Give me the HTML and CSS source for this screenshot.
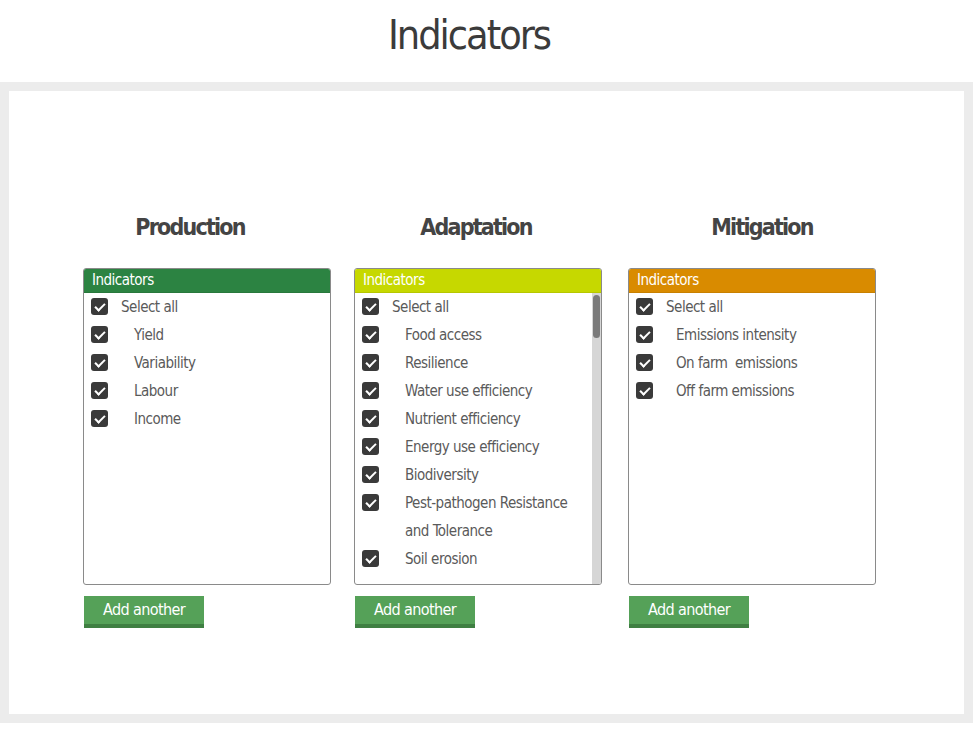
FILE: index.html
```html
<!DOCTYPE html>
<html>
<head>
<meta charset="utf-8">
<link rel="stylesheet" href="styles.css">
</head>
<body>
<header class="page-head"><h1 class="title">Indicators</h1></header>
<div class="frame">
  <div class="columns">
    <section class="col col-prod">
      <h2 class="col-title">Production</h2>
      <div class="box">
        <div class="box-head head-green">Indicators</div>
        <ul class="list">
          <li class="row all"><span class="cb"></span><span class="lbl">Select all</span></li>
          <li class="row"><span class="cb"></span><span class="lbl">Yield</span></li>
          <li class="row"><span class="cb"></span><span class="lbl">Variability</span></li>
          <li class="row"><span class="cb"></span><span class="lbl">Labour</span></li>
          <li class="row"><span class="cb"></span><span class="lbl">Income</span></li>
        </ul>
      </div>
      <button class="add">Add another</button>
    </section>
    <section class="col col-adapt">
      <h2 class="col-title">Adaptation</h2>
      <div class="box">
        <div class="box-head head-lime">Indicators</div>
        <div class="list-wrap">
          <ul class="list">
            <li class="row all"><span class="cb"></span><span class="lbl">Select all</span></li>
            <li class="row"><span class="cb"></span><span class="lbl">Food access</span></li>
            <li class="row"><span class="cb"></span><span class="lbl">Resilience</span></li>
            <li class="row"><span class="cb"></span><span class="lbl">Water use efficiency</span></li>
            <li class="row"><span class="cb"></span><span class="lbl">Nutrient efficiency</span></li>
            <li class="row"><span class="cb"></span><span class="lbl">Energy use efficiency</span></li>
            <li class="row"><span class="cb"></span><span class="lbl">Biodiversity</span></li>
            <li class="row"><span class="cb"></span><span class="lbl">Pest-pathogen Resistance and Tolerance</span></li>
            <li class="row"><span class="cb"></span><span class="lbl">Soil erosion</span></li>
          </ul>
          <div class="sb"><div class="sb-thumb"></div></div>
        </div>
      </div>
      <button class="add">Add another</button>
    </section>
    <section class="col col-mit">
      <h2 class="col-title">Mitigation</h2>
      <div class="box">
        <div class="box-head head-orange">Indicators</div>
        <ul class="list">
          <li class="row all"><span class="cb"></span><span class="lbl">Select all</span></li>
          <li class="row"><span class="cb"></span><span class="lbl">Emissions intensity</span></li>
          <li class="row"><span class="cb"></span><span class="lbl">On farm&nbsp; emissions</span></li>
          <li class="row"><span class="cb"></span><span class="lbl">Off farm emissions</span></li>
        </ul>
      </div>
      <button class="add">Add another</button>
    </section>
  </div>
</div>
</body>
</html>
```
FILE: styles.css
```css
* { box-sizing: border-box; }
body {
  margin: 0;
  background: #fff;
  font-family: "DejaVu Sans", "Liberation Sans", sans-serif;
  font-stretch: condensed;
  color: #555;
}
.page-head {
  height: 82px;
  padding-top: 10px;
  text-align: center;
}
.title {
  margin: 0 0 0 -42px;
  font-size: 41px;
  line-height: 50px;
  font-weight: normal;
  letter-spacing: -2px;
  color: #3b3b3b;
}
.frame {
  width: 973px;
  height: 641px;
  border: 9px solid #ececec;
  background: #fff;
}
.columns {
  display: grid;
  grid-template-columns: 286px 286px 286px;
  margin-left: 38px;
  padding-top: 120px;
}
.col-title {
  margin: 0 0 25px;
  text-align: center;
  font-size: 23px;
  line-height: 32px;
  font-weight: bold;
  letter-spacing: -1.8px;
  color: #444;
}
.box {
  width: 248px;
  height: 317px;
  border: 1px solid #8a8a8a;
  border-radius: 3px;
  overflow: hidden;
  display: flex;
  flex-direction: column;
}
.col-prod .box, .col-prod .add { margin-left: 36px; }
.col-adapt .box, .col-adapt .add { margin-left: 21px; }
.col-mit .box, .col-mit .add { margin-left: 9px; }
.box-head {
  height: 25px;
  margin: -1px -1px 0;
  padding-left: 9px;
  font-size: 15px;
  letter-spacing: -0.5px;
  line-height: 25px;
  color: #fff;
  border-bottom: 1px solid rgba(0,0,0,0.08);
}
.head-green { background: #2c8342; }
.head-lime { background: #c6d800; }
.head-orange { background: #d98b00; }
.list-wrap {
  position: relative;
  flex: 1;
  overflow: hidden;
}
.list {
  list-style: none;
  margin: 0;
  padding: 0 0 0 7px;
}
.row {
  display: flex;
  align-items: flex-start;
  font-size: 15px;
  letter-spacing: -0.5px;
  line-height: 28px;
  color: #5a5a5a;
}
.cb {
  position: relative;
  flex: none;
  width: 17px;
  height: 17px;
  margin-top: 5px;
  background: #3a3a3a;
  border-radius: 3px;
}
.cb::after {
  content: "";
  position: absolute;
  left: 6px;
  top: 3px;
  width: 4px;
  height: 8px;
  border: solid #fff;
  border-width: 0 2px 2px 0;
  transform: rotate(45deg);
}
.lbl { padding-left: 26px; padding-right: 14px; }
.all .lbl { padding-left: 13px; }
.col-mit .row:not(.all) .lbl { padding-left: 23px; }
.sb {
  position: absolute;
  top: 0;
  right: 0;
  bottom: 0;
  width: 9px;
  background: #d6d6d6;
}
.sb-thumb {
  margin: 2px 0 0 1px;
  width: 7px;
  height: 43px;
  border-radius: 4px;
  background: #7b7b7b;
}
.add {
  display: block;
  margin-top: 11px;
  width: 120px;
  height: 32px;
  padding: 0 0 2px;
  border: 0;
  border-bottom: 4px solid #3f7f42;
  background: #55a158;
  color: #fff;
  font-family: inherit;
  font-stretch: condensed;
  font-size: 16px;
  letter-spacing: -0.6px;
  line-height: 28px;
  cursor: pointer;
}
.col-prod .add, .col-adapt .add, .col-mit .add { transform: none; }
.col-prod .add { margin-left: 37px; }
.col-adapt .add { margin-left: 22px; }
.col-mit .add { margin-left: 10px; }
```
